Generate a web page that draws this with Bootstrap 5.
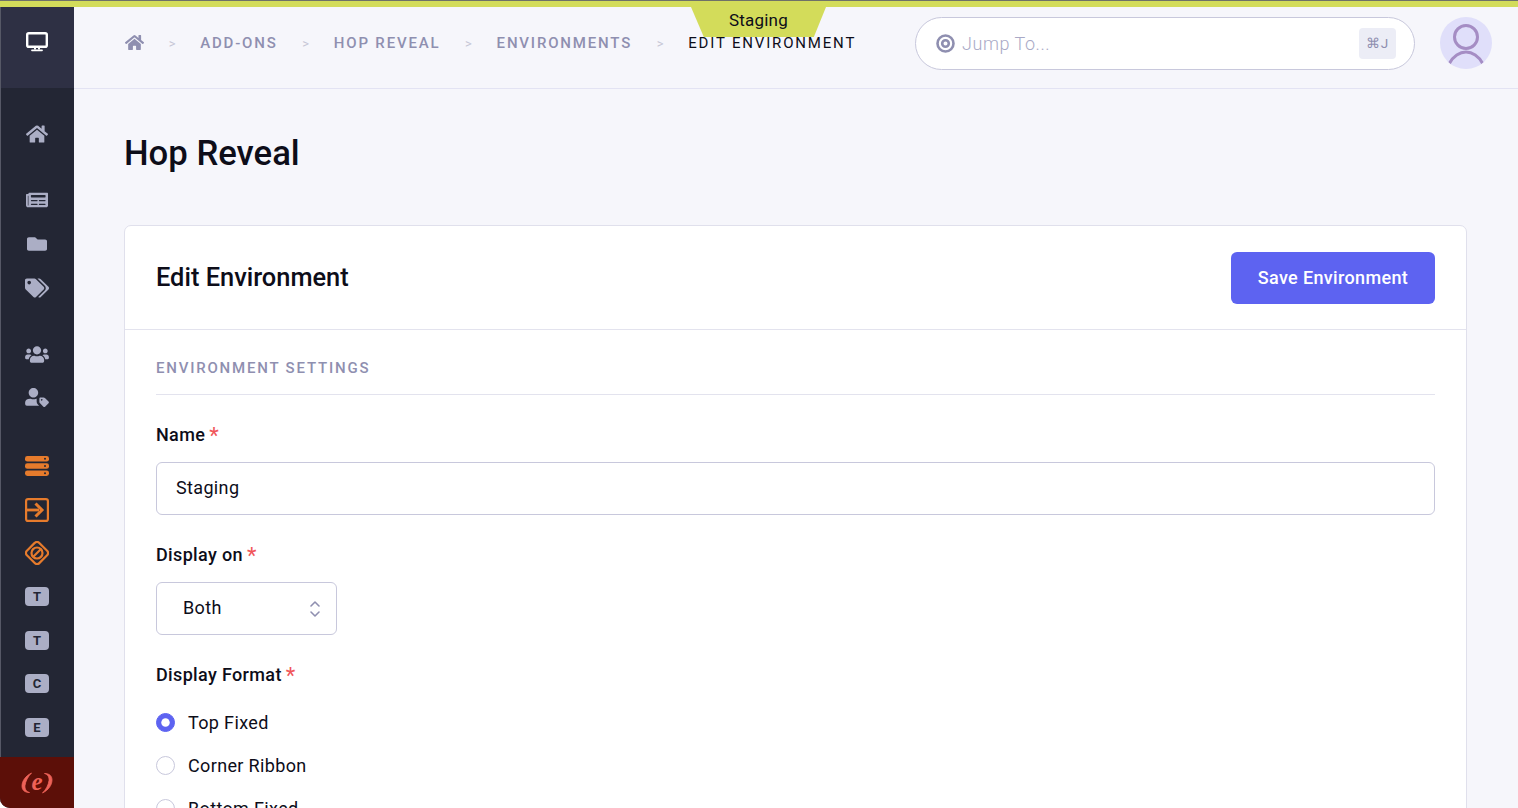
<!DOCTYPE html>
<html lang="en">
<head>
<meta charset="utf-8">
<title>Hop Reveal</title>
<link href="https://cdn.jsdelivr.net/npm/bootstrap@5.3.0/dist/css/bootstrap.min.css" rel="stylesheet">
<style>
html,body{height:100%;overflow:hidden;background:#fff}
body{font-family:Roboto,"Liberation Sans",sans-serif;color:#0d0d19;font-size:18px;letter-spacing:.35px}
.app-stripe{height:7px;background:#d3dc5a;border-top:1px solid #6f7268;flex:none}
.app-tab{position:absolute;top:7px;left:691px;width:135px;height:30px;background:#d3dc5a;clip-path:polygon(0 0,100% 0,91% 100%,9.5% 100%);text-align:center;font-size:17px;line-height:26px;color:#0d0d19;z-index:3;letter-spacing:.2px}
.app-wrap{height:801px;min-height:0}
.app-side{width:74px;flex:none;background:#232634;box-shadow:inset 1px 0 0 #565866;border-bottom-left-radius:10px;overflow:hidden}
.side-top{height:81px;background:#2e3044;flex:none;padding-top:25px;box-shadow:inset 1px 0 0 #565866}
.side-nav{flex:1 1 auto;padding-top:24px}
.side-item{height:43.6px;color:#abaec5;width:100%}
.side-item.hot{color:#e67b2c}
.side-group{margin-bottom:23px}
.side-group.wider{margin-bottom:24.6px}
.side-group.tight{margin-bottom:0}
.side-letter{width:24px;height:19px;border-radius:4px;background:#abaec5;color:#232634;font-size:13px;font-weight:700;line-height:19px;text-align:center;letter-spacing:0}
.side-foot{height:51px;background:#5c0f08;flex:none}
.app-main{background:#f6f6fb;min-width:0;overflow:hidden}
.app-head{height:82px;flex:none;border-bottom:1px solid #e3e3f3;padding:0 26px 9px 50px}
.crumbs{margin:0;font-size:15px;letter-spacing:1.82px;text-transform:uppercase;flex-wrap:nowrap;white-space:nowrap;line-height:20px;width:791px}
.crumbs a{color:#8f8fb0;text-decoration:none;font-weight:500}
.crumbs .breadcrumb-item{padding:0}
.crumbs .breadcrumb-item+.breadcrumb-item::before{content:">";color:#c6c6d6;font-size:13px;padding:0 24.7px;float:none;letter-spacing:0}
.crumbs .here{color:#0d0d19}
.crumb-home{display:block;width:19px;height:17px;color:#8f8fb0;margin-left:1px;margin-top:-1px}
.jump{width:500px;height:53px;background:#fff;border:1px solid #c8c8dc;border-radius:27px;padding:0 18px 0 20px;flex:none}
.jump-gap{margin-right:7px}
.jump-input{border:0;background:transparent;padding:0;font-size:18px;height:30px;letter-spacing:.55px;color:#0d0d19;box-shadow:none!important}
.jump-input::placeholder{color:#a9a9c6;opacity:1;font-weight:300}
.jump-key{width:37px;height:31px;background:#ecedf6;border-radius:4px;font-size:13.5px;color:#8f8fb0;flex:none;letter-spacing:1px}
.avatar-ring{width:52px;height:52px;border-radius:50%;background:#e0dffa;overflow:hidden;flex:none;margin-left:25px}
.page-body{padding:42px 51px 0 50px}
.page-title{font-size:34.7px;font-weight:500;line-height:44px;margin:0 0 50px;color:#0d0d19;letter-spacing:0}
.edit-card{border:1px solid #e0e0ec;border-radius:7px;background:#fff}
.edit-head{height:104px;border-bottom:1px solid #e3e3ee;padding:0 31px;flex:none;border-radius:7px 7px 0 0}
.edit-head h2{font-size:25.4px;font-weight:500;margin:0;color:#0d0d19;letter-spacing:0}
.btn-save{background:#5d63f1;border:0;color:#fff;font-weight:500;font-size:18px;height:52px;width:204px;border-radius:6px;padding:0;letter-spacing:.35px}
.btn-save:hover{background:#5d63f1;color:#fff}
.edit-body{padding:29px 31px 0}
.sect-label{font-size:15px;font-weight:500;letter-spacing:1.8px;color:#8f8fb0;text-transform:uppercase;line-height:20px;padding-bottom:16px;border-bottom:1px solid #e3e3ee;margin-bottom:27px;margin-top:-1px}
.fld{margin-bottom:27px}
.fld-label{font-size:18px;font-weight:500;line-height:26px;margin-bottom:14px;color:#0d0d19;display:block}
.fld-label.tight-gap{margin-bottom:13px}
.req{color:#f0565a;margin-left:4px;font-size:22px;line-height:0;vertical-align:-2px;font-weight:400}
.fld-input{height:53px;font-size:18px;padding:0 19px 2px;border:1px solid #c8c8dc;border-radius:6px;color:#0d0d19;box-shadow:none!important;letter-spacing:.35px}
.fld-select{width:181px;height:53px;font-size:18px;padding:0 19px 2px 26px;border:1px solid #c8c8dc;border-radius:6px;color:#0d0d19;box-shadow:none!important;background-size:14px 18px;background-position:right 14px center;letter-spacing:.35px;background-image:url("data:image/svg+xml,%3Csvg xmlns='http://www.w3.org/2000/svg' viewBox='0 0 14 18' fill='none' stroke='%238f8fb0' stroke-width='1.6' stroke-linecap='round' stroke-linejoin='round'%3E%3Cpath d='M3 6l4-4 4 4M3 12l4 4 4-4'/%3E%3C/svg%3E")}
.radio-row{height:43px;margin:0;padding:0;display:flex;align-items:center;gap:13px;font-size:18px;color:#0d0d19}
.radio-row .form-check-input{width:19px;height:19px;margin:0;float:none;border:1px solid #c8c8dc;box-shadow:none;flex:none}
.radio-row .form-check-input:checked{background-color:#5d63f1;border-color:#5d63f1}
</style>
</head>
<body class="d-flex flex-column">
<div class="app-stripe"></div>
<div class="app-tab">Staging</div>
<div class="app-wrap d-flex">
  <aside class="app-side d-flex flex-column">
    <div class="side-top d-flex justify-content-center">
      <svg width="22" height="20" viewBox="0 0 22 20" fill="none" stroke="#fff"><rect x="1.2" y="1.2" width="19.6" height="13.6" rx="1.6" stroke-width="2.4"/><path d="M9 15v2.5M13 15v2.5" stroke-width="2"/><path d="M6 18.3h10" stroke-width="1.8" stroke-linecap="round"/></svg>
    </div>
    <nav class="side-nav d-flex flex-column">
      <div class="side-group">
        <div class="side-item d-flex align-items-center justify-content-center"><svg width="22" height="20" viewBox="0 0 576 512" fill="currentColor"><path d="M280.37 148.26L96 300.11V464a16 16 0 0 0 16 16l112.06-.29a16 16 0 0 0 15.92-16V368a16 16 0 0 1 16-16h64a16 16 0 0 1 16 16v95.64a16 16 0 0 0 16 16.05L464 480a16 16 0 0 0 16-16V300L295.67 148.26a12.19 12.19 0 0 0-15.3 0zM571.6 251.47L488 182.56V44.05a12 12 0 0 0-12-12h-56a12 12 0 0 0-12 12v72.61L318.47 43a48 48 0 0 0-61 0L4.34 251.47a12 12 0 0 0-1.6 16.9l25.5 31A12 12 0 0 0 45.15 301l235.22-193.74a12.19 12.19 0 0 1 15.3 0L530.9 301a12 12 0 0 0 16.9-1.6l25.5-31a12 12 0 0 0-1.7-16.93z"/></svg></div>
      </div>
      <div class="side-group">
        <div class="side-item d-flex align-items-center justify-content-center"><svg width="22" height="20" viewBox="0 0 576 512" fill="currentColor"><path d="M552 64H88c-13.255 0-24 10.745-24 24v8H24c-13.255 0-24 10.745-24 24v272c0 30.928 25.072 56 56 56h472c26.51 0 48-21.49 48-48V88c0-13.255-10.745-24-24-24zM56 400a8 8 0 0 1-8-8V144h16v248a8 8 0 0 1-8 8zm236-16H140c-6.627 0-12-5.373-12-12v-8c0-6.627 5.373-12 12-12h152c6.627 0 12 5.373 12 12v8c0 6.627-5.373 12-12 12zm208 0H348c-6.627 0-12-5.373-12-12v-8c0-6.627 5.373-12 12-12h152c6.627 0 12 5.373 12 12v8c0 6.627-5.373 12-12 12zm-208-96H140c-6.627 0-12-5.373-12-12v-8c0-6.627 5.373-12 12-12h152c6.627 0 12 5.373 12 12v8c0 6.627-5.373 12-12 12zm208 0H348c-6.627 0-12-5.373-12-12v-8c0-6.627 5.373-12 12-12h152c6.627 0 12 5.373 12 12v8c0 6.627-5.373 12-12 12zm0-96H140c-6.627 0-12-5.373-12-12v-40c0-6.627 5.373-12 12-12h360c6.627 0 12 5.373 12 12v40c0 6.627-5.373 12-12 12z"/></svg></div>
        <div class="side-item d-flex align-items-center justify-content-center"><svg width="20" height="18" viewBox="0 0 512 512" fill="currentColor" preserveAspectRatio="none"><path d="M464 128H272l-64-64H48C21.490 64 0 85.490 0 112v288c0 26.510 21.490 48 48 48h416c26.510 0 48-21.490 48-48V176c0-26.510-21.490-48-48-48z"/></svg></div>
        <div class="side-item d-flex align-items-center justify-content-center"><svg width="24" height="20" viewBox="0 0 640 512" fill="currentColor"><path d="M497.941 225.941L286.059 14.059A48 48 0 0 0 252.118 0H48C21.490 0 0 21.490 0 48v204.118a48 48 0 0 0 14.059 33.941l211.882 211.882c18.744 18.745 49.136 18.746 67.882 0l204.118-204.118c18.745-18.745 18.745-49.137 0-67.882zM112 160c-26.510 0-48-21.490-48-48s21.490-48 48-48 48 21.490 48 48-21.490 48-48 48zm513.941 133.823L421.823 497.941c-18.745 18.745-49.137 18.745-67.882 0l-.36-.36L527.640 323.522c16.999-16.999 26.360-39.600 26.360-63.640s-9.362-46.641-26.360-63.640L331.397 0h48.721a48 48 0 0 1 33.941 14.059l211.882 211.882c18.745 18.745 18.745 49.137 0 67.882z"/></svg></div>
      </div>
      <div class="side-group wider">
        <div class="side-item d-flex align-items-center justify-content-center"><svg width="24" height="19" viewBox="0 0 640 512" fill="currentColor"><path d="M96 224c35.300 0 64-28.700 64-64s-28.700-64-64-64-64 28.700-64 64 28.700 64 64 64zm448 0c35.300 0 64-28.700 64-64s-28.700-64-64-64-64 28.700-64 64 28.700 64 64 64zm32 32h-64c-17.600 0-33.500 7.100-45.100 18.600 40.300 22.100 68.900 62 75.100 109.400h66c17.700 0 32-14.300 32-32v-32c0-35.300-28.700-64-64-64zm-256 0c61.900 0 112-50.100 112-112S381.900 32 320 32 208 82.100 208 144s50.100 112 112 112zm76.800 32h-8.300c-20.800 10-43.900 16-68.500 16s-47.600-6-68.500-16h-8.300C179.600 288 128 339.600 128 403.200V432c0 26.500 21.500 48 48 48h288c26.500 0 48-21.500 48-48v-28.800c0-63.600-51.600-115.200-115.200-115.200zm-223.700-13.400C161.500 263.100 145.600 256 128 256H64c-35.300 0-64 28.700-64 64v32c0 17.700 14.300 32 32 32h65.900c6.300-47.400 34.900-87.300 75.200-109.400z"/></svg></div>
        <div class="side-item d-flex align-items-center justify-content-center"><svg width="24" height="19" viewBox="0 0 640 512" fill="currentColor"><path d="M630.600 364.900l-90.300-90.200c-12-12-28.300-18.700-45.300-18.700h-79.300c-17.700 0-32 14.300-32 32v79.200c0 17 6.700 33.200 18.700 45.200l90.300 90.200c12.500 12.500 32.800 12.500 45.300 0l92.500-92.500c12.600-12.400 12.600-32.700.1-45.200zm-182.800-21c-13.300 0-24-10.700-24-24s10.700-24 24-24 24 10.700 24 24c0 13.200-10.700 24-24 24zm-223.800-88c70.700 0 128-57.300 128-128C352 57.300 294.700 0 224 0S96 57.300 96 128c0 70.600 57.300 128 128 128z"/><path d="M48 480a48 48 0 0 1-48-48v-41.600C0 326.100 50.100 288 134.400 288h16.700c22.200 10.200 46.900 16 72.900 16s50.600-5.800 72.900-16h14.100v79.200c0 30 12 58.100 33.100 79.300L376 480z"/></svg></div>
      </div>
      <div class="side-group tight">
        <div class="side-item hot d-flex align-items-center justify-content-center"><svg width="24" height="20" viewBox="0 0 24 20"><g fill="currentColor"><rect y="0" width="24" height="5.600" rx="2.400"/><rect y="7.200" width="24" height="5.600" rx="2.400"/><rect y="14.400" width="24" height="5.600" rx="2.400"/></g><g fill="#232634"><circle cx="20" cy="2.800" r="1"/><circle cx="20" cy="10" r="1"/><circle cx="20" cy="17.200" r="1"/></g></svg></div>
        <div class="side-item hot d-flex align-items-center justify-content-center"><svg width="24" height="24" viewBox="0 0 24 24" fill="none" stroke="currentColor" stroke-width="2.200"><rect x="1.100" y="1.100" width="21.800" height="21.800" rx="2"/><path d="M2 12h12" stroke-width="2.800"/><path d="M10.500 5.500L17 12l-6.500 6.500" stroke-width="3"/></svg></div>
        <div class="side-item hot d-flex align-items-center justify-content-center"><svg width="24" height="24" viewBox="0 0 24 24" fill="none" stroke="currentColor" stroke-width="2.200"><path d="M9.700 1.900a3.200 3.200 0 0 1 4.600 0l7.800 7.800a3.200 3.200 0 0 1 0 4.600l-7.800 7.800a3.200 3.200 0 0 1-4.600 0l-7.800-7.800a3.200 3.200 0 0 1 0-4.600z"/><circle cx="12" cy="12" r="5.500"/><path d="M8.500 15.500l7-7"/></svg></div>
        <div class="side-item d-flex align-items-center justify-content-center"><div class="side-letter">T</div></div>
        <div class="side-item d-flex align-items-center justify-content-center"><div class="side-letter">T</div></div>
        <div class="side-item d-flex align-items-center justify-content-center"><div class="side-letter">C</div></div>
        <div class="side-item d-flex align-items-center justify-content-center"><div class="side-letter">E</div></div>
      </div>
    </nav>
    <div class="side-foot d-flex align-items-center justify-content-center">
      <svg width="32" height="36" viewBox="0 -7 32 36"><g fill="#ee6258"><path stroke="#ee6258" stroke-width=".8" d="M10.500 1C4.500 4 1 9 1 14c0 4 2.500 6.500 7.500 6.500-3.500-1-4.800-3.500-4.500-7C4.500 9 7 4.500 10.500 1z"/><path stroke="#ee6258" stroke-width=".8" d="M21.500 21c6-3 9.500-8 9.500-13 0-4-2.500-6.500-7.500-6.500 3.500 1 4.800 3.500 4.500 7-.5 4.500-3 9-6.500 12.500z"/><text x="16" y="17.500" text-anchor="middle" font-family="Liberation Serif,serif" font-style="italic" font-weight="700" font-size="25" letter-spacing="0">e</text></g></svg>
    </div>
  </aside>
  <main class="app-main flex-grow-1 d-flex flex-column">
    <header class="app-head d-flex align-items-center">
      <ol class="breadcrumb crumbs align-items-center">
        <li class="breadcrumb-item d-flex align-items-center"><a class="crumb-home" href="#"><svg class="d-block" width="19" height="17" viewBox="0 0 576 512" fill="currentColor"><path d="M280.37 148.26L96 300.11V464a16 16 0 0 0 16 16l112.06-.29a16 16 0 0 0 15.92-16V368a16 16 0 0 1 16-16h64a16 16 0 0 1 16 16v95.64a16 16 0 0 0 16 16.05L464 480a16 16 0 0 0 16-16V300L295.67 148.26a12.19 12.19 0 0 0-15.3 0zM571.6 251.47L488 182.56V44.05a12 12 0 0 0-12-12h-56a12 12 0 0 0-12 12v72.61L318.47 43a48 48 0 0 0-61 0L4.34 251.47a12 12 0 0 0-1.6 16.9l25.5 31A12 12 0 0 0 45.15 301l235.22-193.74a12.19 12.19 0 0 1 15.3 0L530.9 301a12 12 0 0 0 16.9-1.6l25.5-31a12 12 0 0 0-1.7-16.93z"/></svg></a></li>
        <li class="breadcrumb-item"><a href="#">Add-ons</a></li>
        <li class="breadcrumb-item"><a href="#">Hop Reveal</a></li>
        <li class="breadcrumb-item"><a href="#">Environments</a></li>
        <li class="breadcrumb-item here">Edit Environment</li>
      </ol>
      <div class="jump d-flex align-items-center">
        <svg class="flex-shrink-0 jump-gap" width="19" height="19" viewBox="0 0 19 19" fill="none" stroke="#8f8fb0"><circle cx="9.500" cy="9.500" r="8" stroke-width="2.600"/><circle cx="9.500" cy="9.500" r="3.300" stroke-width="2.600"/></svg>
        <input class="form-control jump-input flex-grow-1" type="text" placeholder="Jump To...">
        <div class="jump-key d-flex align-items-center justify-content-center">⌘J</div>
      </div>
      <div class="avatar-ring">
        <svg class="d-block" width="52" height="52" viewBox="0 0 52 52" fill="none" stroke="#a58dc4" stroke-width="3"><circle cx="26" cy="20" r="11.500"/><path d="M9 47c4-8 11-12 17-12s13 4 17 12"/></svg>
      </div>
    </header>
    <div class="page-body flex-grow-1">
      <h1 class="page-title">Hop Reveal</h1>
      <div class="card edit-card">
        <div class="edit-head d-flex align-items-center justify-content-between">
          <h2>Edit Environment</h2>
          <button class="btn btn-save" type="button">Save Environment</button>
        </div>
        <div class="edit-body">
          <div class="sect-label">Environment Settings</div>
          <div class="fld">
            <label class="fld-label" for="envName">Name<span class="req">*</span></label>
            <input class="form-control fld-input" id="envName" type="text" value="Staging">
          </div>
          <div class="fld">
            <label class="fld-label" for="envShow">Display on<span class="req">*</span></label>
            <select class="form-select fld-select" id="envShow"><option>Both</option></select>
          </div>
          <div class="fld">
            <label class="fld-label tight-gap">Display Format<span class="req">*</span></label>
            <div class="form-check radio-row"><input class="form-check-input" type="radio" name="fmt" id="f1" checked><label for="f1">Top Fixed</label></div>
            <div class="form-check radio-row"><input class="form-check-input" type="radio" name="fmt" id="f2"><label for="f2">Corner Ribbon</label></div>
            <div class="form-check radio-row"><input class="form-check-input" type="radio" name="fmt" id="f3"><label for="f3">Bottom Fixed</label></div>
          </div>
        </div>
      </div>
    </div>
  </main>
</div>
<script src="https://cdn.jsdelivr.net/npm/bootstrap@5.3.0/dist/js/bootstrap.bundle.min.js"></script>
</body>
</html>
